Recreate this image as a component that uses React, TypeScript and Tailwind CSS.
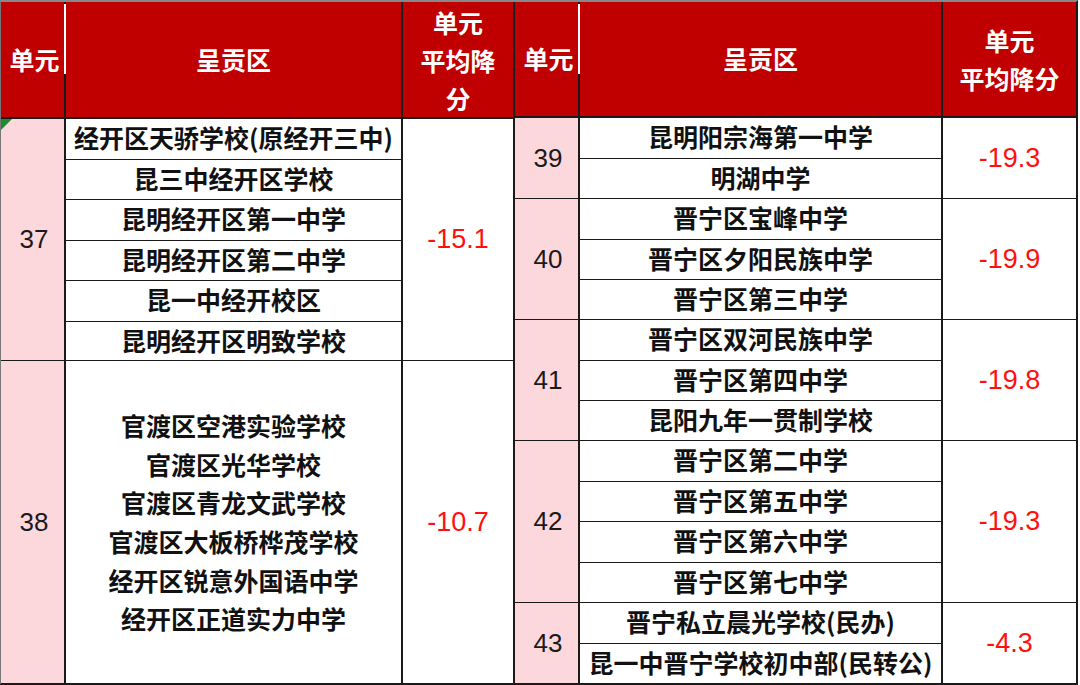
import React from "react";

const cjk = "font-['Noto_Sans_CJK_SC','Noto_Sans',sans-serif]";
const num = "font-['Liberation_Sans',Arial,sans-serif]";

type Group = {
  unit: string;
  schools: string[];
  score: string;
  h: string;
};

const right: Group[] = [
  { unit: "39", schools: ["昆明阳宗海第一中学", "明湖中学"], score: "-19.3", h: "h-[81px]" },
  { unit: "40", schools: ["晋宁区宝峰中学", "晋宁区夕阳民族中学", "晋宁区第三中学"], score: "-19.9", h: "h-[121px]" },
  { unit: "41", schools: ["晋宁区双河民族中学", "晋宁区第四中学", "昆阳九年一贯制学校"], score: "-19.8", h: "h-[121px]" },
  { unit: "42", schools: ["晋宁区第二中学", "晋宁区第五中学", "晋宁区第六中学", "晋宁区第七中学"], score: "-19.3", h: "h-[162px]" },
  { unit: "43", schools: ["晋宁私立晨光学校(民办)", "昆一中晋宁学校初中部(民转公)"], score: "-4.3", h: "flex-1" },
];

const g37 = [
  "经开区天骄学校(原经开三中)",
  "昆三中经开区学校",
  "昆明经开区第一中学",
  "昆明经开区第二中学",
  "昆一中经开校区",
  "昆明经开区明致学校",
];

const g38 = [
  "官渡区空港实验学校",
  "官渡区光华学校",
  "官渡区青龙文武学校",
  "官渡区大板桥桦茂学校",
  "经开区锐意外国语中学",
  "经开区正道实力中学",
];

const unitCell = `flex w-[65px] items-center justify-center border-r-2 border-[#1a1a1a] bg-[#fcd8dd] pl-[3px] text-[26px] text-[#1a1a1a] ${num}`;
const scoreCell = `flex flex-1 items-center justify-center text-[27px] text-[#ff1010] ${num}`;

function SchoolRows({ schools }: { schools: string[] }) {
  return (
    <>
      {schools.map((s, i) => (
        <div
          key={s}
          className={`flex flex-1 items-center justify-center whitespace-nowrap pb-[2px] ${
            i < schools.length - 1 ? "border-b border-[#1a1a1a]" : ""
          }`}
        >
          {s}
        </div>
      ))}
    </>
  );
}

function Header({ unitW, schoolW, scoreLines }: { unitW: string; schoolW: string; scoreLines: string[] }) {
  return (
    <div className="flex h-[117px] border-b-2 border-[#1a1a1a] bg-[#c00000] font-bold text-white">
      <div className={`relative flex ${unitW} items-center justify-center border-r-2 border-[#1a1a1a] pl-1`}>
        单元
        <span className="absolute right-[-2px] top-[2px] h-[70px] w-[2px] bg-white" />
      </div>
      <div className={`flex ${schoolW} items-center justify-center border-r-2 border-[#1a1a1a]`}>呈贡区</div>
      <div className="flex flex-1 flex-col items-center justify-center leading-[38px]">
        {scoreLines.map((l) => (
          <span key={l}>{l}</span>
        ))}
      </div>
    </div>
  );
}

export default function App() {
  return (
    <div className="h-[685px] w-[1080px] overflow-hidden bg-white">
      <div
        className={`flex h-[685px] w-[1078px] border-b-2 border-l border-r-2 border-t-2 border-b-[#1a1a1a] border-l-[#777] border-r-[#1a1a1a] border-t-[#888] text-[25px] text-[#111] ${cjk}`}
      >
        {/* left table */}
        <div className="flex w-[514px] flex-col border-r-2 border-[#1a1a1a]">
          <Header unitW="w-[65px]" schoolW="w-[337px]" scoreLines={["单元", "平均降", "分"]} />
          <div className="flex h-[242px] border-b border-[#1a1a1a]">
            <div className={`relative ${unitCell}`}>
              <svg className="absolute left-0 top-0" width="11" height="11" viewBox="0 0 11 11">
                <polygon points="0,0 11,0 0,11" fill="#1f8a2e" />
              </svg>
              37
            </div>
            <div className="flex w-[337px] flex-col border-r-2 border-[#1a1a1a] font-bold">
              <SchoolRows schools={g37} />
            </div>
            <div className={scoreCell}>-15.1</div>
          </div>
          <div className="flex flex-1">
            <div className={unitCell}>38</div>
            <div className="flex w-[337px] flex-col items-center justify-center border-r-2 border-[#1a1a1a] font-bold leading-[38.6px]">
              {g38.map((s) => (
                <span key={s} className="whitespace-nowrap">
                  {s}
                </span>
              ))}
            </div>
            <div className={scoreCell}>-10.7</div>
          </div>
        </div>

        {/* right table */}
        <div className="flex flex-1 flex-col">
          <Header unitW="w-[65px]" schoolW="w-[363px]" scoreLines={["单元", "平均降分"]} />
          {right.map((g, i) => (
            <div
              key={g.unit}
              className={`flex ${g.h} ${i < right.length - 1 ? "border-b border-[#1a1a1a]" : ""}`}
            >
              <div className={unitCell}>{g.unit}</div>
              <div className="flex w-[363px] flex-col border-r-2 border-[#1a1a1a] font-bold">
                <SchoolRows schools={g.schools} />
              </div>
              <div className={scoreCell}>{g.score}</div>
            </div>
          ))}
        </div>
      </div>
    </div>
  );
}
